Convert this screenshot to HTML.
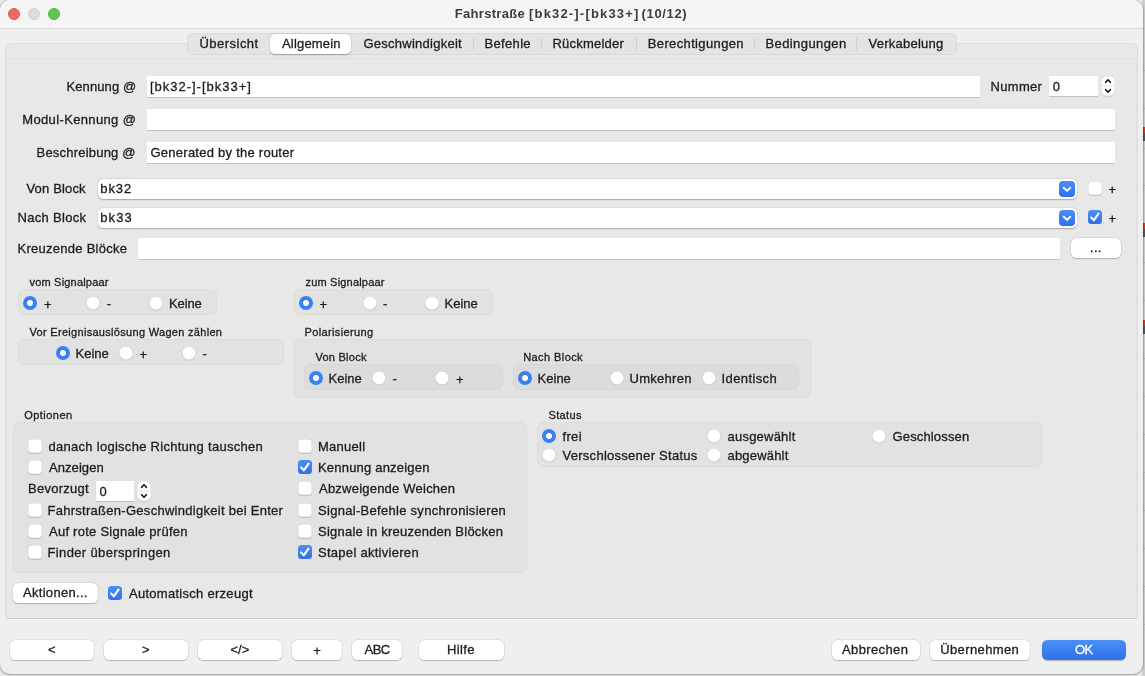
<!DOCTYPE html>
<html lang="de"><head><meta charset="utf-8"><title>Fahrstraße</title>
<style>
*{box-sizing:border-box;margin:0;padding:0}
html,body{width:1145px;height:676px;overflow:hidden;background:#fff}
body{font-family:"Liberation Sans", sans-serif;position:relative}
.backdrop{position:absolute;left:0;top:0;width:1145px;height:676px;background:linear-gradient(#cfcfcf,#cfcfcf) right/3px 100% no-repeat,#ebebeb}
.backdrop i{position:absolute;left:1143px;width:2px;display:block}
.win{position:absolute;left:0;top:0;width:1143px;height:674px;background:#efefef;border-radius:10px;overflow:hidden;box-shadow:0 0 0 1px rgba(0,0,0,.13),0 1px 3px rgba(0,0,0,.25);will-change:transform}
.win>*{position:absolute}
.titlebar{left:0;top:0;width:100%;height:29px;background:#f5f5f5;border-bottom:1px solid #d9d9d9}
.tl{width:12px;height:12px;border-radius:50%;border:1px solid}
.t{white-space:nowrap;line-height:20px;height:20px;-webkit-text-stroke:0.3px currentColor}
.panel{background:#e8e8e8;border:1px solid #dedede;border-radius:4.5px 4.5px 2px 2px}
.panel2{background:#e8e8e8;border-top:1px solid #e0e0e0;border-bottom:1px solid #c9c9c9;border-left:1px solid #e2e2e2;border-right:1px solid #e2e2e2;border-radius:0 0 2px 2px}
.tabbar{background:#e4e4e4;border:1px solid #dadada;border-radius:6px}
.tabsel{background:#fff;border-radius:5px;box-shadow:0 0.5px 1.5px rgba(0,0,0,.3)}
.sep{background:#d0d0d0}
.inp{background:#fff;border-bottom:1px solid #c2c2c2}
.combo{background:#fff;border-radius:5px;box-shadow:0 0.5px 1.2px rgba(0,0,0,.26),0 0 0 0.5px rgba(0,0,0,.05)}
.cbtn{width:16px;height:16px;border-radius:4px;background:linear-gradient(#4b8ff8,#2f70ea)}
.cbtn svg,.cb svg,.st svg{display:block}
.cb{width:14px;height:14px;border-radius:3.5px;background:#fff;box-shadow:inset 0 0 0 0.5px rgba(0,0,0,.16),0 0.5px 0.8px rgba(0,0,0,.14)}
.cb.on{background:linear-gradient(#4b8ff8,#2f70ea);box-shadow:none}
.rd{width:14px;height:14px;border-radius:50%;background:#fff;box-shadow:inset 0 0 0 0.5px rgba(0,0,0,.16),0 0.5px 0.8px rgba(0,0,0,.14)}
.rd.on{background:radial-gradient(circle,#fff 0,#fff 2.6px,#3b7ff4 3.4px,#3b7ff4 100%);box-shadow:none}
.st{width:14px;height:20px;border-radius:5.5px;background:#fff;box-shadow:inset 0 0 0 0.5px rgba(0,0,0,.11),0 0.6px 0.9px rgba(0,0,0,.2)}
.grp{background:#e2e2e2;border-radius:6px;border:1px solid #dddddd}
.grp2{background:#dcdcdc;border-radius:6px;border:1px solid #d7d7d7}
.btn{background:#fff;border-radius:5.5px;box-shadow:0 0.5px 1.2px rgba(0,0,0,.22),0 0 0 0.5px rgba(0,0,0,.06)}
.btn.primary{background:linear-gradient(#4b8ff8,#2f70ea);box-shadow:0 0.5px 1px rgba(0,0,0,.25)}
</style></head>
<body>
<div class="backdrop"><i style="top:127px;height:6px;background:#d9342b"></i><i style="top:133px;height:8px;background:#555"></i><i style="top:223px;height:6px;background:#d9342b"></i><i style="top:229px;height:8px;background:#555"></i><i style="top:320px;height:6px;background:#d9342b"></i><i style="top:326px;height:8px;background:#555"></i><i style="top:70px;height:1px;background:#b8b8b8"></i><i style="top:108px;height:1px;background:#b8b8b8"></i><i style="top:148px;height:1px;background:#b8b8b8"></i><i style="top:185px;height:1px;background:#b8b8b8"></i><i style="top:262px;height:1px;background:#b8b8b8"></i><i style="top:300px;height:1px;background:#b8b8b8"></i><i style="top:358px;height:1px;background:#b8b8b8"></i><i style="top:396px;height:1px;background:#b8b8b8"></i><i style="top:434px;height:1px;background:#b8b8b8"></i><i style="top:472px;height:1px;background:#b8b8b8"></i><i style="top:510px;height:1px;background:#b8b8b8"></i><i style="top:548px;height:1px;background:#b8b8b8"></i><i style="top:586px;height:1px;background:#b8b8b8"></i><i style="top:624px;height:1px;background:#b8b8b8"></i></div>
<div class="win">
<div class="titlebar"></div>
<div class="tl" style="left:8px;top:8px;background:#ed6a5e;border-color:#df5a4e"></div>
<div class="tl" style="left:28px;top:8px;background:#dddddd;border-color:#cecece"></div>
<div class="tl" style="left:48px;top:8px;background:#61c554;border-color:#54b147"></div>
<span class="t" style="left:454.75px;top:3.70px;font-size:13px;color:#3c3c3c;font-weight:700;-webkit-text-stroke:0;letter-spacing:0.306px;">Fahrstraße</span>
<span class="t" style="left:529.00px;top:3.70px;font-size:13px;color:#3c3c3c;font-weight:700;-webkit-text-stroke:0;letter-spacing:1.179px;">[bk32-]-[bk33+]</span>
<span class="t" style="left:641.50px;top:3.70px;font-size:13px;color:#3c3c3c;font-weight:700;-webkit-text-stroke:0;letter-spacing:0.667px;">(10/12)</span>
<div class="panel" style="left:5.3px;top:43px;width:1132.7px;height:575.5px;"></div>
<div class="panel2" style="left:6.3px;top:58px;width:1130.6px;height:560.5px;"></div>
<div class="tabbar" style="left:187px;top:33px;width:770px;height:22px;"></div>
<div class="tabsel" style="left:270px;top:34px;width:81px;height:20px;"></div>
<span class="t" style="left:199.50px;top:33.70px;font-size:13px;color:#1c1c1c;letter-spacing:0.469px;">Übersicht</span>
<span class="t" style="left:282.00px;top:33.70px;font-size:13px;color:#1c1c1c;letter-spacing:0.188px;">Allgemein</span>
<span class="t" style="left:363.50px;top:33.70px;font-size:13px;color:#1c1c1c;letter-spacing:0.250px;">Geschwindigkeit</span>
<span class="t" style="left:484.50px;top:33.70px;font-size:13px;color:#1c1c1c;letter-spacing:0.333px;">Befehle</span>
<span class="t" style="left:552.50px;top:33.70px;font-size:13px;color:#1c1c1c;letter-spacing:0.222px;">Rückmelder</span>
<span class="t" style="left:647.75px;top:33.70px;font-size:13px;color:#1c1c1c;letter-spacing:0.365px;">Berechtigungen</span>
<span class="t" style="left:765.50px;top:33.70px;font-size:13px;color:#1c1c1c;letter-spacing:0.400px;">Bedingungen</span>
<span class="t" style="left:868.50px;top:33.70px;font-size:13px;color:#1c1c1c;letter-spacing:0.250px;">Verkabelung</span>
<div class="sep" style="left:473px;top:38px;width:1px;height:12px;"></div>
<div class="sep" style="left:541px;top:38px;width:1px;height:12px;"></div>
<div class="sep" style="left:636px;top:38px;width:1px;height:12px;"></div>
<div class="sep" style="left:754px;top:38px;width:1px;height:12px;"></div>
<div class="sep" style="left:856px;top:38px;width:1px;height:12px;"></div>
<span class="t" style="left:66.50px;top:76.70px;font-size:13px;color:#1c1c1c;letter-spacing:0.094px;">Kennung @</span>
<div class="inp" style="left:147px;top:76px;width:833px;height:22px;"></div>
<span class="t" style="left:150.00px;top:76.70px;font-size:13px;color:#1c1c1c;letter-spacing:0.982px;">[bk32-]-[bk33+]</span>
<span class="t" style="left:990.60px;top:76.70px;font-size:13px;color:#1c1c1c;letter-spacing:0.280px;">Nummer</span>
<div class="inp" style="left:1049px;top:76px;width:49px;height:21px;"></div>
<span class="t" style="left:1052.70px;top:76.70px;font-size:13px;color:#1c1c1c;">0</span>
<div class="st" style="left:1101px;top:76px"><svg width="14" height="20" viewBox="0 0 14 20"><path d="M4.6 6.35 L7 3.75 L9.4 6.35" fill="none" stroke="#111" stroke-width="1.5" stroke-linecap="round" stroke-linejoin="round"/><path d="M4.6 13.65 L7 16.25 L9.4 13.65" fill="none" stroke="#111" stroke-width="1.5" stroke-linecap="round" stroke-linejoin="round"/><path d="M0.5 9.9 H13.5" stroke="#e0e0e0" stroke-width="0.9"/></svg></div>
<span class="t" style="left:22.25px;top:109.70px;font-size:13px;color:#1c1c1c;letter-spacing:0.357px;">Modul-Kennung @</span>
<div class="inp" style="left:147px;top:109px;width:968px;height:22px;"></div>
<span class="t" style="left:36.50px;top:142.70px;font-size:13px;color:#1c1c1c;letter-spacing:0.212px;">Beschreibung @</span>
<div class="inp" style="left:147px;top:142px;width:968px;height:22px;"></div>
<span class="t" style="left:150.50px;top:142.70px;font-size:13px;color:#1c1c1c;letter-spacing:0.250px;">Generated by the router</span>
<span class="t" style="left:26.50px;top:178.70px;font-size:13px;color:#1c1c1c;letter-spacing:0.156px;">Von Block</span>
<div class="combo" style="left:98px;top:179px;width:979px;height:20px;"></div>
<span class="t" style="left:100.25px;top:178.70px;font-size:13px;color:#1c1c1c;letter-spacing:0.917px;">bk32</span>
<div class="cbtn" style="left:1059px;top:181px"><svg width="16" height="16" viewBox="0 0 16 16"><path d="M4.7 6.8 L8 9.9 L11.3 6.8" fill="none" stroke="#fff" stroke-width="1.9" stroke-linecap="round" stroke-linejoin="round"/></svg></div>
<div class="cb" style="left:1088px;top:181px"></div>
<span class="t" style="left:1108.60px;top:179.70px;font-size:13px;color:#1c1c1c;">+</span>
<span class="t" style="left:17.50px;top:207.70px;font-size:13px;color:#1c1c1c;letter-spacing:0.306px;">Nach Block</span>
<div class="combo" style="left:98px;top:208px;width:979px;height:20px;"></div>
<span class="t" style="left:100.25px;top:207.70px;font-size:13px;color:#1c1c1c;letter-spacing:1.083px;">bk33</span>
<div class="cbtn" style="left:1059px;top:210px"><svg width="16" height="16" viewBox="0 0 16 16"><path d="M4.7 6.8 L8 9.9 L11.3 6.8" fill="none" stroke="#fff" stroke-width="1.9" stroke-linecap="round" stroke-linejoin="round"/></svg></div>
<div class="cb on" style="left:1088px;top:210px"><svg width="14" height="14" viewBox="0 0 14 14"><path d="M3.1 7.4 L5.8 10.3 L10.5 3.6" fill="none" stroke="#fff" stroke-width="2.1" stroke-linecap="round" stroke-linejoin="round"/></svg></div>
<span class="t" style="left:1108.60px;top:208.70px;font-size:13px;color:#1c1c1c;">+</span>
<span class="t" style="left:17.50px;top:238.70px;font-size:13px;color:#1c1c1c;letter-spacing:0.267px;">Kreuzende Blöcke</span>
<div class="inp" style="left:138px;top:238px;width:922px;height:22px;"></div>
<div class="btn" style="left:1071px;top:238px;width:50px;height:20px;"></div>
<span class="t" style="left:1090.00px;top:237.70px;font-size:13px;color:#1c1c1c;letter-spacing:0.300px;">...</span>
<span class="t" style="left:29.50px;top:271.96px;font-size:11px;color:#1c1c1c;letter-spacing:0.192px;">vom Signalpaar</span>
<div class="grp" style="left:18px;top:289px;width:198.5px;height:26px;"></div>
<div class="rd on" style="left:23px;top:296.25px"></div>
<span class="t" style="left:44.00px;top:294.70px;font-size:13px;color:#1c1c1c;">+</span>
<div class="rd" style="left:86px;top:296.25px"></div>
<span class="t" style="left:106.75px;top:293.70px;font-size:13px;color:#1c1c1c;">-</span>
<div class="rd" style="left:149px;top:296.25px"></div>
<span class="t" style="left:169.00px;top:293.70px;font-size:13px;color:#1c1c1c;letter-spacing:-0.125px;">Keine</span>
<span class="t" style="left:305.50px;top:271.96px;font-size:11px;color:#1c1c1c;letter-spacing:0.192px;">zum Signalpaar</span>
<div class="grp" style="left:294px;top:289px;width:199px;height:26px;"></div>
<div class="rd on" style="left:299px;top:296.25px"></div>
<span class="t" style="left:319.50px;top:294.70px;font-size:13px;color:#1c1c1c;">+</span>
<div class="rd" style="left:362.5px;top:296.25px"></div>
<span class="t" style="left:383.00px;top:293.70px;font-size:13px;color:#1c1c1c;">-</span>
<div class="rd" style="left:425px;top:296.25px"></div>
<span class="t" style="left:444.50px;top:293.70px;font-size:13px;color:#1c1c1c;">Keine</span>
<span class="t" style="left:29.50px;top:321.96px;font-size:11px;color:#1c1c1c;letter-spacing:0.303px;">Vor Ereignisauslösung Wagen zählen</span>
<div class="grp" style="left:18px;top:339px;width:265.5px;height:26px;"></div>
<div class="rd on" style="left:56px;top:346px"></div>
<span class="t" style="left:75.50px;top:343.70px;font-size:13px;color:#1c1c1c;">Keine</span>
<div class="rd" style="left:119px;top:346px"></div>
<span class="t" style="left:139.50px;top:344.70px;font-size:13px;color:#1c1c1c;">+</span>
<div class="rd" style="left:182px;top:346px"></div>
<span class="t" style="left:202.50px;top:343.70px;font-size:13px;color:#1c1c1c;">-</span>
<span class="t" style="left:304.50px;top:321.96px;font-size:11px;color:#1c1c1c;letter-spacing:0.375px;">Polarisierung</span>
<div class="grp" style="left:294px;top:339px;width:517px;height:58.5px;"></div>
<span class="t" style="left:315.50px;top:346.96px;font-size:11px;color:#1c1c1c;letter-spacing:0.250px;">Von Block</span>
<div class="grp2" style="left:304px;top:364px;width:199px;height:25.5px;"></div>
<div class="rd on" style="left:309px;top:371px"></div>
<span class="t" style="left:328.50px;top:368.70px;font-size:13px;color:#1c1c1c;">Keine</span>
<div class="rd" style="left:372px;top:371px"></div>
<span class="t" style="left:392.50px;top:368.70px;font-size:13px;color:#1c1c1c;">-</span>
<div class="rd" style="left:435px;top:371px"></div>
<span class="t" style="left:456.00px;top:369.70px;font-size:13px;color:#1c1c1c;">+</span>
<span class="t" style="left:523.20px;top:346.96px;font-size:11px;color:#1c1c1c;letter-spacing:0.422px;">Nach Block</span>
<div class="grp2" style="left:513px;top:364px;width:286px;height:25.5px;"></div>
<div class="rd on" style="left:518px;top:371px"></div>
<span class="t" style="left:537.60px;top:368.70px;font-size:13px;color:#1c1c1c;">Keine</span>
<div class="rd" style="left:610px;top:371px"></div>
<span class="t" style="left:629.50px;top:368.70px;font-size:13px;color:#1c1c1c;letter-spacing:0.271px;">Umkehren</span>
<div class="rd" style="left:701.7px;top:371px"></div>
<span class="t" style="left:721.50px;top:368.70px;font-size:13px;color:#1c1c1c;letter-spacing:0.400px;">Identisch</span>
<span class="t" style="left:24.25px;top:405.36px;font-size:11px;color:#1c1c1c;letter-spacing:0.464px;">Optionen</span>
<div class="grp" style="left:13px;top:422px;width:513.5px;height:150.5px;"></div>
<div class="cb" style="left:28px;top:439.0px"></div>
<span class="t" style="left:48.50px;top:436.70px;font-size:13px;color:#1c1c1c;letter-spacing:0.281px;">danach logische Richtung tauschen</span>
<div class="cb" style="left:298px;top:439.0px"></div>
<span class="t" style="left:318.00px;top:436.70px;font-size:13px;color:#1c1c1c;letter-spacing:0.250px;">Manuell</span>
<div class="cb" style="left:28px;top:460.25px"></div>
<span class="t" style="left:49.00px;top:457.70px;font-size:13px;color:#1c1c1c;letter-spacing:0.071px;">Anzeigen</span>
<div class="cb on" style="left:298px;top:460.25px"><svg width="14" height="14" viewBox="0 0 14 14"><path d="M3.1 7.4 L5.8 10.3 L10.5 3.6" fill="none" stroke="#fff" stroke-width="2.1" stroke-linecap="round" stroke-linejoin="round"/></svg></div>
<span class="t" style="left:318.00px;top:457.70px;font-size:13px;color:#1c1c1c;letter-spacing:0.200px;">Kennung anzeigen</span>
<div class="cb" style="left:298px;top:481.25px"></div>
<span class="t" style="left:319.00px;top:478.70px;font-size:13px;color:#1c1c1c;letter-spacing:0.222px;">Abzweigende Weichen</span>
<div class="cb" style="left:28px;top:503.0px"></div>
<span class="t" style="left:47.50px;top:500.70px;font-size:13px;color:#1c1c1c;letter-spacing:0.278px;">Fahrstraßen-Geschwindigkeit bei Enter</span>
<div class="cb" style="left:298px;top:503.0px"></div>
<span class="t" style="left:318.00px;top:500.70px;font-size:13px;color:#1c1c1c;letter-spacing:0.293px;">Signal-Befehle synchronisieren</span>
<div class="cb" style="left:28px;top:524.0px"></div>
<span class="t" style="left:49.00px;top:521.70px;font-size:13px;color:#1c1c1c;letter-spacing:0.250px;">Auf rote Signale prüfen</span>
<div class="cb" style="left:298px;top:524.0px"></div>
<span class="t" style="left:318.00px;top:521.70px;font-size:13px;color:#1c1c1c;letter-spacing:0.232px;">Signale in kreuzenden Blöcken</span>
<div class="cb" style="left:28px;top:545.0px"></div>
<span class="t" style="left:47.50px;top:542.70px;font-size:13px;color:#1c1c1c;letter-spacing:0.361px;">Finder überspringen</span>
<div class="cb on" style="left:298px;top:545.0px"><svg width="14" height="14" viewBox="0 0 14 14"><path d="M3.1 7.4 L5.8 10.3 L10.5 3.6" fill="none" stroke="#fff" stroke-width="2.1" stroke-linecap="round" stroke-linejoin="round"/></svg></div>
<span class="t" style="left:318.00px;top:542.70px;font-size:13px;color:#1c1c1c;letter-spacing:0.281px;">Stapel aktivieren</span>
<span class="t" style="left:28.00px;top:478.70px;font-size:13px;color:#1c1c1c;letter-spacing:0.250px;">Bevorzugt</span>
<div class="inp" style="left:96px;top:481px;width:38px;height:21px;"></div>
<span class="t" style="left:99.50px;top:481.70px;font-size:13px;color:#1c1c1c;">0</span>
<div class="st" style="left:137px;top:481px"><svg width="14" height="20" viewBox="0 0 14 20"><path d="M4.6 6.35 L7 3.75 L9.4 6.35" fill="none" stroke="#111" stroke-width="1.5" stroke-linecap="round" stroke-linejoin="round"/><path d="M4.6 13.65 L7 16.25 L9.4 13.65" fill="none" stroke="#111" stroke-width="1.5" stroke-linecap="round" stroke-linejoin="round"/><path d="M0.5 9.9 H13.5" stroke="#e0e0e0" stroke-width="0.9"/></svg></div>
<span class="t" style="left:548.50px;top:405.36px;font-size:11px;color:#1c1c1c;letter-spacing:0.350px;">Status</span>
<div class="grp" style="left:537px;top:422px;width:505px;height:44.5px;"></div>
<div class="rd on" style="left:542px;top:429.25px"></div>
<span class="t" style="left:562.50px;top:426.70px;font-size:13px;color:#1c1c1c;letter-spacing:0.333px;">frei</span>
<div class="rd" style="left:707px;top:429.25px"></div>
<span class="t" style="left:727.50px;top:426.70px;font-size:13px;color:#1c1c1c;letter-spacing:0.222px;">ausgewählt</span>
<div class="rd" style="left:872px;top:429.25px"></div>
<span class="t" style="left:892.50px;top:426.70px;font-size:13px;color:#1c1c1c;letter-spacing:0.150px;">Geschlossen</span>
<div class="rd" style="left:542px;top:448.25px"></div>
<span class="t" style="left:562.50px;top:445.70px;font-size:13px;color:#1c1c1c;letter-spacing:0.275px;">Verschlossener Status</span>
<div class="rd" style="left:707px;top:448.25px"></div>
<span class="t" style="left:727.50px;top:445.70px;font-size:13px;color:#1c1c1c;letter-spacing:0.188px;">abgewählt</span>
<div class="btn" style="left:13px;top:583px;width:85px;height:20px;"></div>
<span class="t" style="left:23.00px;top:582.70px;font-size:13px;color:#1c1c1c;letter-spacing:0.300px;">Aktionen...</span>
<div class="cb on" style="left:108px;top:586.25px"><svg width="14" height="14" viewBox="0 0 14 14"><path d="M3.1 7.4 L5.8 10.3 L10.5 3.6" fill="none" stroke="#fff" stroke-width="2.1" stroke-linecap="round" stroke-linejoin="round"/></svg></div>
<span class="t" style="left:129.00px;top:583.70px;font-size:13px;color:#1c1c1c;letter-spacing:0.278px;">Automatisch erzeugt</span>
<div class="btn" style="left:9.5px;top:640px;width:84.75px;height:20px;"></div>
<span class="t" style="left:48.00px;top:639.70px;font-size:13px;color:#1c1c1c;">&lt;</span>
<div class="btn" style="left:103.5px;top:640px;width:84.5px;height:20px;"></div>
<span class="t" style="left:142.00px;top:639.70px;font-size:13px;color:#1c1c1c;">&gt;</span>
<div class="btn" style="left:197.5px;top:640px;width:84.5px;height:20px;"></div>
<span class="t" style="left:230.50px;top:639.70px;font-size:13px;color:#1c1c1c;">&lt;/&gt;</span>
<div class="btn" style="left:291.5px;top:640px;width:50.5px;height:20px;"></div>
<span class="t" style="left:313.25px;top:640.70px;font-size:13px;color:#1c1c1c;">+</span>
<div class="btn" style="left:352px;top:640px;width:50px;height:20px;"></div>
<span class="t" style="left:364.50px;top:639.70px;font-size:13px;color:#1c1c1c;letter-spacing:-0.500px;">ABC</span>
<div class="btn" style="left:418.5px;top:640px;width:85px;height:20px;"></div>
<span class="t" style="left:447.00px;top:639.70px;font-size:13px;color:#1c1c1c;letter-spacing:0.375px;">Hilfe</span>
<div class="btn" style="left:831.5px;top:640px;width:88px;height:20px;"></div>
<span class="t" style="left:842.00px;top:639.70px;font-size:13px;color:#1c1c1c;letter-spacing:0.375px;">Abbrechen</span>
<div class="btn" style="left:930px;top:640px;width:100px;height:20px;"></div>
<span class="t" style="left:940.20px;top:639.70px;font-size:13px;color:#1c1c1c;letter-spacing:0.389px;">Übernehmen</span>
<div class="btn primary" style="left:1042px;top:640px;width:84px;height:20px;"></div>
<span class="t" style="left:1075.00px;top:639.70px;font-size:13px;color:#fff;letter-spacing:-0.600px;">OK</span>
</div>
</body></html>
